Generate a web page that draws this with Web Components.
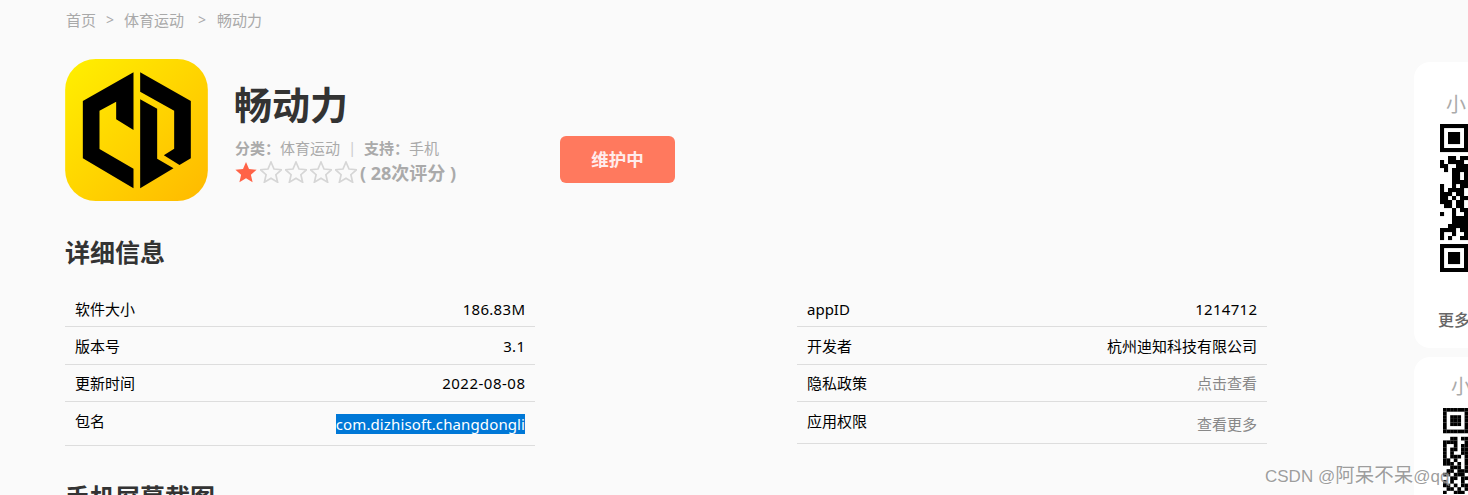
<!DOCTYPE html>
<html lang="zh">
<head>
<meta charset="utf-8">
<title>畅动力</title>
<style>
    html, body {
        margin: 0;
        height: 495px;
        overflow: hidden;
        background: #fafafa;
        font-family: "Noto Sans", "Noto Sans CJK SC", sans-serif;
    }
</style>
</head>
<body>
<app-page>
    <bread-crumb></bread-crumb>
    <app-header name="畅动力" category="体育运动" support="手机" votes="28"></app-header>
    <section-title style="margin-top: 35px">详细信息</section-title>
    <info-grid>
        <info-table>
            <info-row label="软件大小" value="186.83M" h="35" pad="8" ls=".3"></info-row>
            <info-row label="版本号" value="3.1" h="37" ls=".3"></info-row>
            <info-row label="更新时间" value="2022-08-08" h="36" pad="8" ls=".5"></info-row>
            <info-row label="包名" value="com.dizhisoft.changdongli" h="43" pad="9" vpad="12" ls=".12" kind="selected"></info-row>
        </info-table>
        <info-table>
            <info-row label="appID" value="1214712" h="35" pad="8" ls=".3"></info-row>
            <info-row label="开发者" value="杭州迪知科技有限公司" h="37"></info-row>
            <info-row label="隐私政策" value="点击查看" h="36" pad="8" kind="link"></info-row>
            <info-row label="应用权限" value="查看更多" h="41" pad="9" vpad="12" kind="link"></info-row>
        </info-table>
    </info-grid>
    <section-title style="margin-top: 35px">手机屏幕截图</section-title>
    <side-card slot="side" title-x="32" qr-x="26" more="更多" style="height: 286px"></side-card>
    <side-card slot="side" title-x="37" qr-x="29" small style="height: 200px; margin-top: 9px"></side-card>
</app-page>
<water-mark>CSDN @<span style="font-size: 19.5px">阿呆不呆</span>@qq</water-mark>

<script>
class AppPage extends HTMLElement {
    constructor() {
        super();
        this.attachShadow({mode: "open"}).innerHTML = `
            <style>
                :host { display: flex; width: 1668px; height: 495px; overflow: hidden; }
                .main { flex: 0 0 1349px; padding-left: 65px; width: 1349px; }
                .side { flex: 0 0 254px; padding-top: 62px; }
            </style>
            <div class="main"><slot></slot></div>
            <div class="side"><slot name="side"></slot></div>`;
    }
}

class BreadCrumb extends HTMLElement {
    constructor() {
        super();
        this.attachShadow({mode: "open"}).innerHTML = `
            <style>
                :host { display: flex; height: 38px; align-items: center; font-size: 15px; color: #a9a9a9; padding-left: 1px; }
                i { font-style: normal; font-size: 14px; }
                .a { margin: 0 10px; }
                .b { margin: 0 11px 0 14px; }
            </style>
            <span>首页</span><i class="a">&gt;</i><span>体育运动</span><i class="b">&gt;</i><span>畅动力</span>`;
    }
}

class AppIcon extends HTMLElement {
    constructor() {
        super();
        this.attachShadow({mode: "open"}).innerHTML = `
            <style>
                :host { display: block; width: 143px; height: 142px; }
                svg { display: block; }
            </style>
            <svg width="143" height="142" viewBox="45 177 428 426">
                <defs>
                    <linearGradient id="g" x1="0" y1="0" x2="1" y2="1">
                        <stop offset="0" stop-color="#fff000"/>
                        <stop offset="1" stop-color="#ffb900"/>
                    </linearGradient>
                </defs>
                <rect x="45" y="177" width="428" height="426" rx="92" fill="url(#g)"/>
                <path d="M250 217V390L198 358V305L148 332V447L250 506V565L98 475V303Z"/>
                <path d="M270 217L422 303V475L388 495L341 466L372 446V332L270 275Z"/>
                <path d="M270 298L321 326V476L370 505L270 565Z"/>
            </svg>`;
    }
}

class StarRating extends HTMLElement {
    constructor() {
        super();
        const score = Number(this.getAttribute("score"));
        const star = "M11 1L14 8L21.6 8.7L15.9 13.7L17.6 21.2L11 17.3L4.4 21.2L6.1 13.7L0.4 8.7L8 8Z";
        let stars = "";
        for (let i = 0; i < 5; i++) {
            stars += i < score
                ? `<svg width="22" height="22" viewBox="0 0 22 22"><path d="${star}" fill="#ff6347"/></svg>`
                : `<svg width="22" height="22" viewBox="0 0 22 22"><path d="${star}" fill="none" stroke="#d6d6d6" stroke-width="1.7"/></svg>`;
        }
        this.attachShadow({mode: "open"}).innerHTML = `
            <style>
                :host { display: flex; gap: 3px; align-items: center; }
                svg { display: block; }
            </style>
            ${stars}`;
    }
}

class AppHeader extends HTMLElement {
    constructor() {
        super();
        const name = this.getAttribute("name");
        const category = this.getAttribute("category");
        const support = this.getAttribute("support");
        const votes = this.getAttribute("votes");
        this.attachShadow({mode: "open"}).innerHTML = `
            <style>
                :host { display: flex; margin-top: 21px; height: 142px; }
                .info { margin-left: 27px; width: 325px; }
                h1 { margin: 19px 0 0 -1px; font-size: 38px; line-height: 52px; font-weight: 700; color: #333; }
                .meta { margin-top: 6px; height: 22px; display: flex; align-items: center; font-size: 15px; color: #aaa; white-space: pre; }
                .meta b { font-weight: 700; }
                .sep { width: 24px; text-align: center; color: #ccc; }
                .rate { display: flex; align-items: center; height: 26px; margin-top: 1px; }
                .votes { margin-left: 3px; font-size: 18px; font-weight: 700; color: #aaa; white-space: pre; }
                .btn { align-self: flex-start; margin-top: 77px; width: 115px; height: 47px; line-height: 47px; text-align: center; border-radius: 6px; background: #ff795e; color: #ffecec; font-size: 17.5px; font-weight: 700; }
            </style>
            <app-icon></app-icon>
            <div class="info">
                <h1>${name}</h1>
                <div class="meta"><b>分类：</b><span>${category}</span><span class="sep">|</span><b>支持：</b><span>${support}</span></div>
                <div class="rate"><star-rating score="1"></star-rating><span class="votes">( ${votes}次评分 )</span></div>
            </div>
            <div class="btn">维护中</div>`;
    }
}

class SectionTitle extends HTMLElement {
    constructor() {
        super();
        this.attachShadow({mode: "open"}).innerHTML = `
            <style>
                :host { display: block; font-size: 25px; line-height: 32px; font-weight: 700; color: #333; }
            </style>
            <slot></slot>`;
    }
}

class InfoGrid extends HTMLElement {
    constructor() {
        super();
        this.attachShadow({mode: "open"}).innerHTML = `
            <style>
                :host { display: grid; grid-template-columns: 470px 470px; column-gap: 262px; margin-top: 23px; align-items: start; }
            </style>
            <slot></slot>`;
    }
}

class InfoTable extends HTMLElement {
    constructor() {
        super();
        this.attachShadow({mode: "open"}).innerHTML = `
            <style>
                :host { display: block; height: 155px; }
            </style>
            <slot></slot>`;
    }
}

class InfoRow extends HTMLElement {
    constructor() {
        super();
        const h = this.getAttribute("h");
        const kind = this.getAttribute("kind") || "";
        const pad = this.getAttribute("pad") || 9;
        const vpad = this.getAttribute("vpad") || pad;
        const ls = this.getAttribute("ls") || 0;
        this.attachShadow({mode: "open"}).innerHTML = `
            <style>
                :host { display: flex; justify-content: space-between; height: ${h}px; padding: 0 10px; border-bottom: 1px solid #ddd; font-size: 15px; color: #000; }
                .l, .v { line-height: 20px; }
                .l { padding-top: ${pad}px; }
                .v { padding-top: ${vpad}px; letter-spacing: ${ls}px; margin-right: -${ls}px; }
                .link { color: #888; }
                .selected span { display: block; background: #0078d7; color: #fff; }
            </style>
            <div class="l">${this.getAttribute("label")}</div>
            <div class="v ${kind}"><span>${this.getAttribute("value")}</span></div>`;
    }
}

const QR_BIG = [
    "XXXXXXX", "X.....X", "X.XXX.X", "X.XXX.X", "X.XXX.X", "X.....X", "XXXXXXX", ".......",
    "..XX.XX", "X.XXXX.", "XX..XXX", ".X.XXXX", "...XX.X", "...XX.X", "...XXXX", "X..X.XX",
    "X.XXXX.", "XXX.XX.", "XX.X.XX", "XXX.XX.", ".XX.XX.", "...X.XX", "X..X..X", "...XXXX",
    "...XXXX", "..XXXXX", "XXXX.XX", "X..X..X", "X.X..XX", ".......",
    "XXXXXXX", "X.....X", "X.XXX.X", "X.XXX.X", "X.XXX.X", "X.....X", "XXXXXXX"
];
const QR_SMALL = [
    "XXXXXXX", "X.....X", "X.XXX.X", "X.XXX.X", "X.XXX.X", "X.....X", "XXXXXXX", ".......",
    "..XX.XX", "XXXX..X", "X..X.XX", "X.XX.XX", "X.X..XX", "X.XXX.X", "XX.X..X", "XXX.X.X",
    "..XXX.X", ".XX.XXX", "XX.XXX.", "..XX.XX", "X.X..X.", "XX.X.XX", ".XX.X.X", "X..XXX."
];

class QrCode extends HTMLElement {
    constructor() {
        super();
        const m = Number(this.getAttribute("module"));
        const rows = this.hasAttribute("small") ? QR_SMALL : QR_BIG;
        let rects = "";
        rows.forEach((row, y) => {
            [...row].forEach((c, x) => {
                if (c === "X") rects += `<rect x="${x}" y="${y}" width="1.02" height="1.02"/>`;
            });
        });
        this.attachShadow({mode: "open"}).innerHTML = `
            <style>
                :host { display: block; width: ${7 * m}px; height: ${rows.length * m}px; }
                svg { display: block; }
            </style>
            <svg width="${7 * m}" height="${rows.length * m}" viewBox="0 0 7 ${rows.length}">${rects}</svg>`;
    }
}

class SideCard extends HTMLElement {
    constructor() {
        super();
        const small = this.hasAttribute("small");
        const more = this.getAttribute("more");
        this.attachShadow({mode: "open"}).innerHTML = `
            <style>
                :host { display: block; width: 240px; background: #fff; border-radius: 16px; overflow: hidden; }
                .t { margin: ${small ? 18 : 30}px 0 0 ${this.getAttribute("title-x")}px; font-size: 20px; line-height: ${small ? 24 : 26}px; color: #aaa; }
                qr-code { margin: ${small ? 9 : 6}px 0 0 ${this.getAttribute("qr-x")}px; }
                .more { margin: 36px 0 0 24px; font-size: 16px; line-height: 24px; font-weight: 500; color: #666; }
            </style>
            <div class="t">小</div>
            <qr-code module="${small ? 3.6 : 4}" ${small ? "small" : ""}></qr-code>
            ${more ? `<div class="more">${more}</div>` : ""}`;
    }
}

class WaterMark extends HTMLElement {
    constructor() {
        super();
        this.attachShadow({mode: "open"}).innerHTML = `
            <style>
                :host { position: absolute; left: 1265px; top: 462px; font-size: 17px; line-height: 26px; color: rgba(140, 140, 140, 0.85); text-shadow: 1px 1px 1px rgba(255, 255, 255, 0.6); white-space: nowrap; font-family: "Liberation Sans", "Noto Sans CJK SC", sans-serif; }
            </style>
            <slot></slot>`;
    }
}

customElements.define("app-page", AppPage);
customElements.define("bread-crumb", BreadCrumb);
customElements.define("app-icon", AppIcon);
customElements.define("star-rating", StarRating);
customElements.define("app-header", AppHeader);
customElements.define("section-title", SectionTitle);
customElements.define("info-grid", InfoGrid);
customElements.define("info-table", InfoTable);
customElements.define("info-row", InfoRow);
customElements.define("qr-code", QrCode);
customElements.define("side-card", SideCard);
customElements.define("water-mark", WaterMark);
</script>
</body>
</html>
